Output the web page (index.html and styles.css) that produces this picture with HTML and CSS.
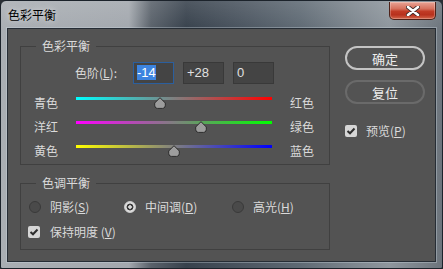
FILE: index.html
```html
<!DOCTYPE html>
<html lang="zh-CN">
<head>
  <meta charset="UTF-8" />
  <title>色彩平衡</title>
  <link rel="stylesheet" href="styles.css">
</head>
<body>
  <div class="window">
    <div class="titlebar">
      <span class="title">色彩平衡</span>
      <button class="close" aria-label="关闭">
        <svg width="14" height="10" viewBox="0 0 14 10">
          <path d="M2 1 L12 9 M12 1 L2 9" stroke="#3a2a28" stroke-width="4.2" stroke-linecap="round"/>
          <path d="M2 1 L12 9 M12 1 L2 9" stroke="#fff" stroke-width="2.6" stroke-linecap="round"/>
        </svg>
      </button>
    </div>

    <div class="content">
      <div class="groups">
        <fieldset class="group balance">
          <legend>色彩平衡</legend>
          <div class="levels">
            <label class="levels-label">色阶(<u>L</u>):</label>
            <span class="num active"><span class="sel">-14</span></span>
            <span class="num">+28</span>
            <span class="num">0</span>
          </div>

          <div class="slider-row">
            <span>青色</span>
            <div class="slider">
              <div class="track cyan-red"></div>
              <svg class="thumb" style="left:43%" width="13" height="12" viewBox="0 0 13 12"><path d="M6.5 0.7 L11.8 6 Q12.3 11.4 9 11.4 H4 Q0.7 11.4 1.2 6 Z" fill="#9d9d9d" stroke="#2c2c2c"/></svg>
            </div>
            <span class="right">红色</span>
          </div>
          <div class="slider-row">
            <span>洋红</span>
            <div class="slider">
              <div class="track magenta-green"></div>
              <svg class="thumb" style="left:64%" width="13" height="12" viewBox="0 0 13 12"><path d="M6.5 0.7 L11.8 6 Q12.3 11.4 9 11.4 H4 Q0.7 11.4 1.2 6 Z" fill="#9d9d9d" stroke="#2c2c2c"/></svg>
            </div>
            <span class="right">绿色</span>
          </div>
          <div class="slider-row last">
            <span>黄色</span>
            <div class="slider">
              <div class="track yellow-blue"></div>
              <svg class="thumb" style="left:50%" width="13" height="12" viewBox="0 0 13 12"><path d="M6.5 0.7 L11.8 6 Q12.3 11.4 9 11.4 H4 Q0.7 11.4 1.2 6 Z" fill="#9d9d9d" stroke="#2c2c2c"/></svg>
            </div>
            <span class="right">蓝色</span>
          </div>
        </fieldset>

        <fieldset class="group tone">
          <legend>色调平衡</legend>
          <div class="radios">
            <label class="radio"><span class="dot"></span><span>阴影(<u>S</u>)</span></label>
            <label class="radio"><span class="dot on"></span><span>中间调(<u>D</u>)</span></label>
            <label class="radio"><span class="dot"></span><span>高光(<u>H</u>)</span></label>
          </div>
          <label class="check keep">
            <span class="box"><svg width="10" height="8" viewBox="0 0 10 8"><path d="M1.5 4 L4 6.3 L8.5 1.5" fill="none" stroke="#2e2e2e" stroke-width="2"/></svg></span>
            <span>保持明度 (<u>V</u>)</span>
          </label>
        </fieldset>
      </div>

      <div class="actions">
        <button class="btn primary">确定</button>
        <button class="btn">复位</button>
        <label class="check preview">
          <span class="box"><svg width="10" height="8" viewBox="0 0 10 8"><path d="M1.5 4 L4 6.3 L8.5 1.5" fill="none" stroke="#2e2e2e" stroke-width="2"/></svg></span>
          <span>预览(<u>P</u>)</span>
        </label>
      </div>
    </div>
  </div>
</body>
</html>
```

FILE: styles.css
```css
body {
  margin: 0; background: #2a2f35;
  font-family: "Noto Sans CJK SC", "Noto Sans", sans-serif; font-size: 12px; color: #dadada;
}
.window {
  width: 443px; height: 269px; box-sizing: border-box;
  display: flex; flex-direction: column;
  padding: 0 6px 6px;
  border: 1px solid #1c232b; border-radius: 6px 6px 2px 2px;
  background:
    linear-gradient(to bottom, rgba(255,255,255,0.12), rgba(255,255,255,0) 30px),
    linear-gradient(to right, #a9aeb3 0%, #a3a8ae 29%, #59616a 34%, #37414c 42%, #4b5560 55%, #5f6a74 68%, #7d868e 80%, #8e969d 88%, #6c747c 100%);
}

/* title bar */
.titlebar {
  height: 27px; display: flex; justify-content: space-between; align-items: flex-start;
}
.title {
  margin: 6px 0 0 1px; color: #000; font-size: 12px; line-height: 16px;
  text-shadow: 0 0 6px rgba(255,255,255,0.7);
}
.close {
  width: 47px; height: 18px; margin-top: 1px; padding: 0;
  display: flex; align-items: center; justify-content: center;
  border: 1px solid #4e2219; border-top: none; border-radius: 0 0 5px 5px;
  background: linear-gradient(to bottom, #e9a495 0%, #d6705c 40%, #c13b25 55%, #b8311d 75%, #d2654a 100%);
  box-shadow: inset 0 0 0 1px rgba(255,255,255,0.25);
}

/* dialog body */
.content {
  flex: 1; background: #535353;
  border: 1px solid #262d35; box-shadow: 0 0 0 1px rgba(210,220,230,0.35);
  display: grid; grid-template-columns: 310px 80px; column-gap: 15px;
  padding: 9px 0 0 12px;
}
.groups { display: flex; flex-direction: column; gap: 10px; }
.group {
  margin: 0; min-width: 0; padding: 8px 0 5px;
  border: 1px solid #404040;
}
.group legend {
  margin-left: 15px; padding: 0 6px; line-height: 16px; color: #dadada;
}
.tone { padding-bottom: 9px; }

/* level inputs */
.levels {
  display: flex; gap: 9px; height: 22px; margin-bottom: 11px; padding-left: 54px;
}
.levels-label { width: 49px; line-height: 22px; }
.num {
  width: 41px; height: 22px; box-sizing: border-box; padding: 2px 3px;
  background: #444; border: 1px solid #393939;
  font-family: "Liberation Sans", Arial, sans-serif; font-size: 13px; line-height: 16px; color: #e0e0e0;
}
.num.active { border-color: #2b5f9e; }
.sel { background: #3d84df; color: #fff; }

/* sliders */
.slider-row {
  display: grid; grid-template-columns: 42px 196px auto; height: 24px; padding-left: 13px;
  line-height: 16px;
}
.slider-row.last { height: 16px; }
.slider-row .right { margin-left: 18px; }
.slider { position: relative; }
.track { height: 3px; margin-top: 2px; }
.cyan-red { background: linear-gradient(to right, #00ffff, #ff0000); }
.magenta-green { background: linear-gradient(to right, #ff00ff, #00ff00); }
.yellow-blue { background: linear-gradient(to right, #ffff00, #0000ff); }
.thumb { position: absolute; top: 2px; transform: translateX(-50%); }

/* radios and checks */
.radios {
  display: grid; grid-template-columns: 95px 108px auto; padding-left: 8px; line-height: 16px;
  margin-bottom: 9px;
}
.radio { display: flex; align-items: center; gap: 9px; }
.dot {
  width: 12px; height: 12px; box-sizing: border-box; border-radius: 50%;
  background: #4a4a4a; border: 1px solid #3a3a3a;
}
.dot.on {
  border-color: #cfcfcf;
  background: radial-gradient(circle, #d8d8d8 0 1.5px, #3a3a3a 2px 3.2px, #dcdcdc 3.7px);
}
.check { display: flex; align-items: center; gap: 10px; line-height: 16px; }
.keep { padding-left: 7px; }
.box {
  width: 12px; height: 12px; border-radius: 2px; background: #d6d6d6;
  display: flex; align-items: center; justify-content: center;
}
u { text-underline-offset: 1px; }

/* buttons */
.actions { display: flex; flex-direction: column; padding-top: 8px; }
.btn {
  height: 24px; margin-bottom: 10px; padding: 0;
  background: #535353; color: #ececec; border: 2px solid #6a6a6a; border-radius: 12px;
  font-family: inherit; font-size: 13px;
}
.btn.primary { border-color: #c4c4c4; }
.preview { margin-top: 9px; gap: 9px; }
```
